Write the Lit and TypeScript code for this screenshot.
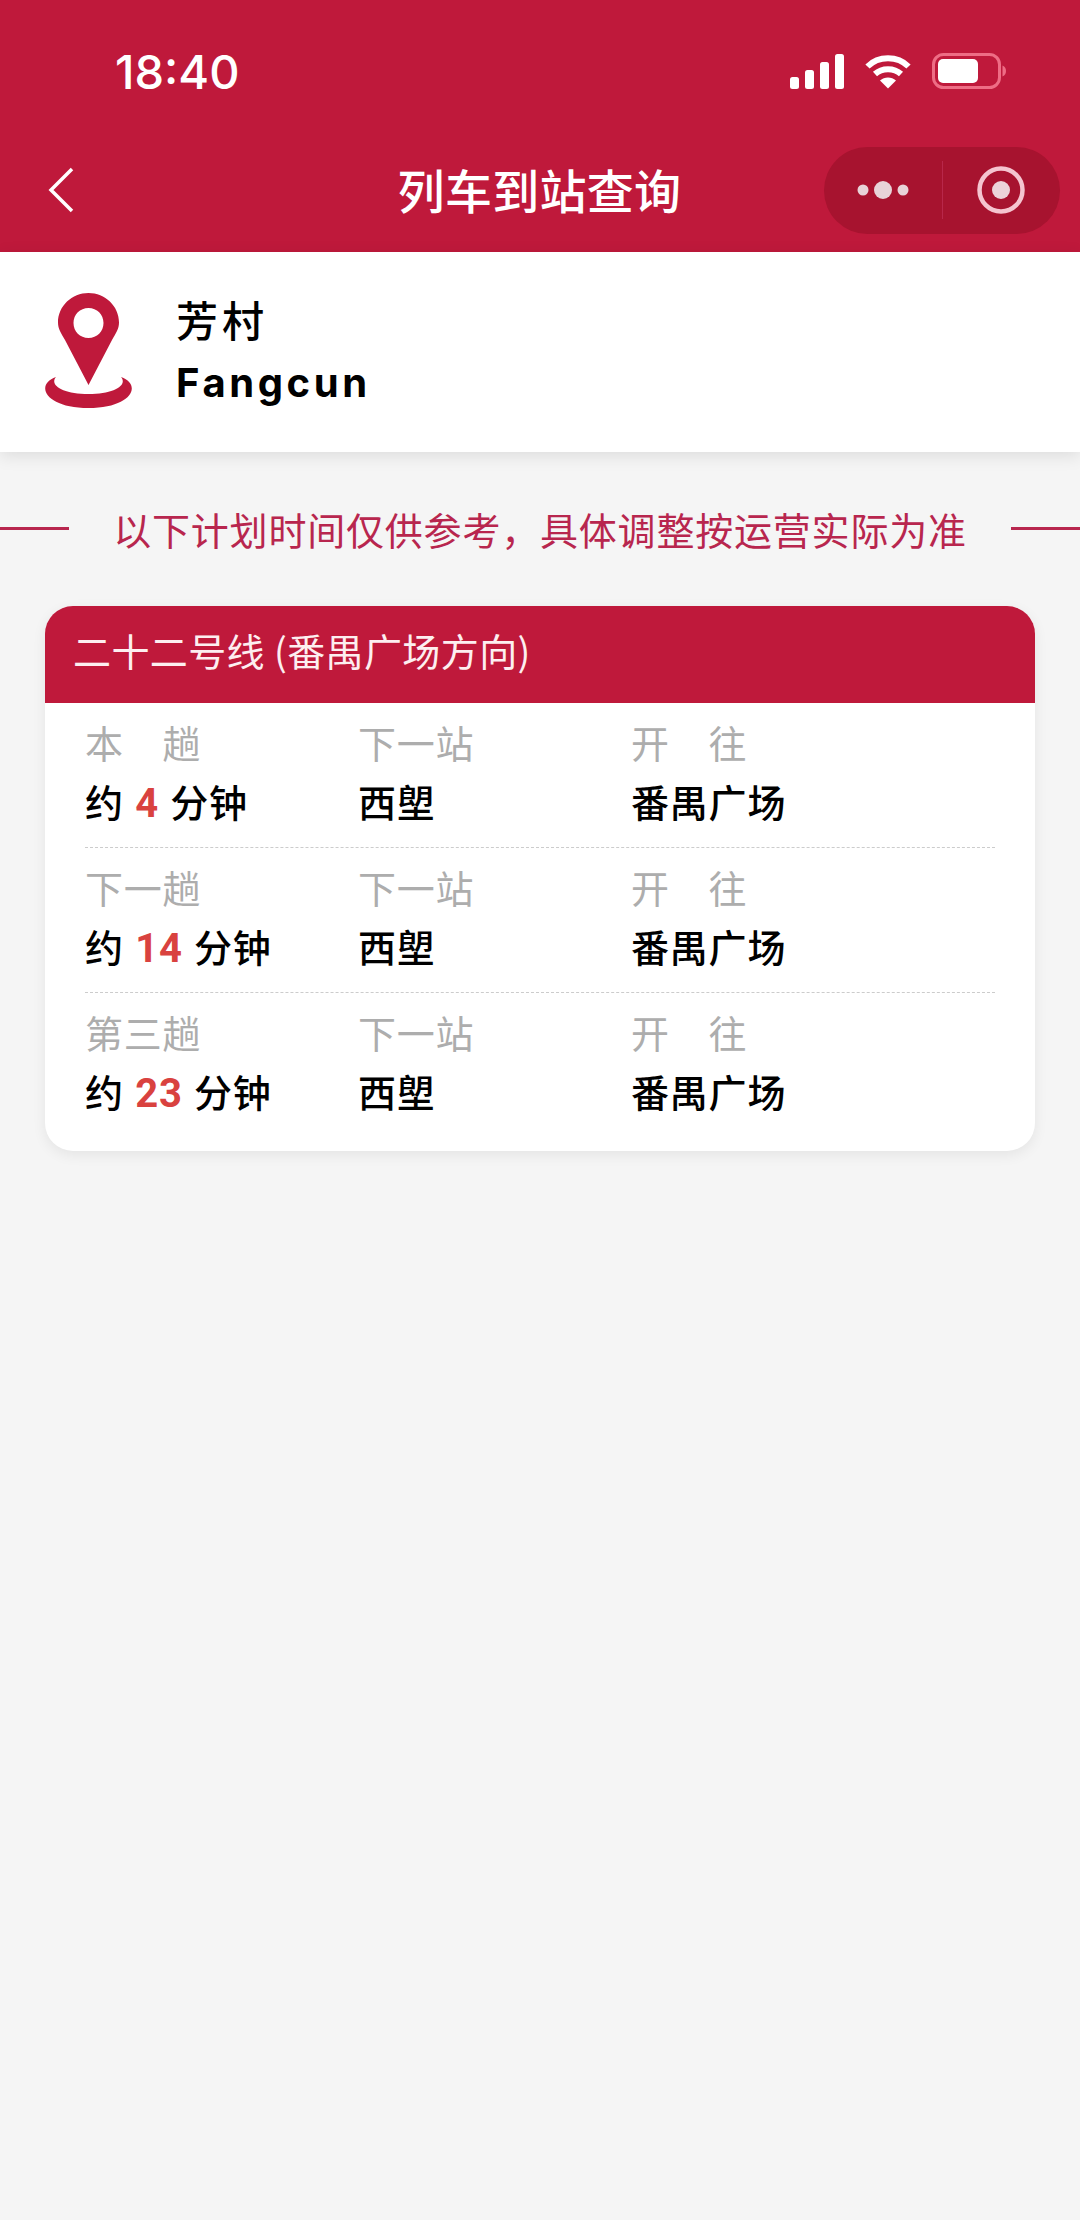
import { LitElement, html, css } from "lit";
import { customElement } from "lit/decorators.js";

const rows = [
  { label: "本　趟", n: "4" },
  { label: "下一趟", n: "14" },
  { label: "第三趟", n: "23" },
];

@customElement("app-root")
export class AppRoot extends LitElement {
  static styles = css`
    :host { display: block; width: 1080px; height: 2220px; background: #f5f5f5; font-family: "Noto Sans CJK SC", "Noto Sans", sans-serif; overflow: hidden; }
    .top { height: 252px; background: #bf193b; color: #fff; display: flex; flex-direction: column; }
    .status { height: 142px; display: flex; align-items: center; justify-content: space-between; padding: 0 74px 0 115px; box-sizing: border-box; }
    .time { font: 500 47px/1 Inter, Roboto, sans-serif; }
    .sicons { display: flex; align-items: center; gap: 21px; }
    .sicons svg { display: block; }
    .nav { flex: 1; display: grid; grid-template-columns: 1fr auto 1fr; align-items: center; padding: 0 20px 0 47px; }
    .back { display: block; margin-top: -14px; }
    .title { font-size: 47px; font-weight: 500; letter-spacing: .3px; line-height: 1; margin: -17px 0 0 -28px; white-space: nowrap; }
    .capsule { justify-self: end; width: 236px; height: 87px; border-radius: 44px; background: #a7132f; display: flex; align-items: center; margin-top: -14px; }
    .capsule > div { flex: 1; display: flex; align-items: center; justify-content: center; height: 58px; }
    .capsule > div + div { border-left: 1px solid #b8274a; }
    .station { height: 200px; background: #fff; box-shadow: 0 4px 16px rgba(0,0,0,.1); display: flex; align-items: center; gap: 43px; padding-left: 44px; position: relative; }
    .station svg { margin-top: -4px; }
    .names { font-size: 42px; font-weight: 500; color: #000; line-height: 64px; letter-spacing: 4px; margin-top: -2px; }
    .names div:last-child { font-size: 40px; font-weight: 700; letter-spacing: 3.6px; font-family: Inter, "Noto Sans", sans-serif; }
    .notice { height: 154px; display: flex; align-items: center; justify-content: space-between; color: #b8264e; font-size: 38px; letter-spacing: .8px; box-sizing: border-box; padding-bottom: 2px; }
    .notice i { display: block; width: 69px; height: 3px; background: #b8264e; }
    .card { margin: 0 45px; background: #fff; border-radius: 28px; overflow: hidden; box-shadow: 0 4px 14px rgba(0,0,0,.07); }
    .chead { height: 97px; background: #bf193b; color: #fdeef0; font-size: 38px; letter-spacing: .4px; display: flex; align-items: center; padding: 0 0 10px 28px; box-sizing: border-box; }
    .rows { padding: 0 40px; }
    .row { display: grid; grid-template-columns: 273px 273px 273px; height: 145px; align-content: start; padding-top: 14px; box-sizing: border-box; border-bottom: 1px dashed #ccc; }
    .row:last-child { border-bottom: 0; height: 158px; }
    .l { color: #adadad; font-size: 38px; letter-spacing: .8px; line-height: 50px; }
    .v { color: #000; font-size: 38px; font-weight: 500; letter-spacing: .8px; word-spacing: 2px; line-height: 50px; margin-top: 9px; white-space: pre; }
    .v b { color: #d9423f; font-family: Roboto, sans-serif; font-size: 40px; font-weight: 700; }
  `;

  render() {
    return html`
      <div class="top">
        <div class="status">
          <span class="time">18:40</span>
          <div class="sicons">
            <svg width="54" height="35" viewBox="0 0 54 35" fill="#fff">
              <rect x="0" y="23" width="9" height="12" rx="2.5"/>
              <rect x="15" y="16" width="9" height="19" rx="2.5"/>
              <rect x="30" y="8" width="9" height="27" rx="2.5"/>
              <rect x="45" y="0" width="9" height="35" rx="2.5"/>
            </svg>
            <svg width="46" height="35" viewBox="0 0 46 35" fill="none" stroke="#fff" stroke-width="6">
              <path d="M2.5 12.5C13.5 1.500 32.500 1.500 43.500 12.500"/>
              <path d="M10 20C17 13.500 29 13.500 36 20"/>
              <path d="M23 34.500L15 26.500C19.500 22.500 26.500 22.500 31 26.500Z" fill="#fff" stroke="none"/>
            </svg>
            <svg width="74" height="36" viewBox="0 0 74 36">
              <rect x="1.500" y="1.500" width="66" height="33" rx="10" fill="none" stroke="#ee6d85" stroke-width="3"/>
              <rect x="6" y="6" width="40" height="24" rx="5" fill="#fff"/>
              <path d="M70.500 12.500C73 13.500 74 15.500 74 18C74 20.500 73 22.500 70.500 23.500Z" fill="#ee6d85"/>
            </svg>
          </div>
        </div>
        <div class="nav">
          <svg class="back" width="30" height="46" viewBox="0 0 30 46" fill="none" stroke="#fff" stroke-width="3.500">
            <path d="M25 2L4 23L25 44"/>
          </svg>
          <div class="title">列车到站查询</div>
          <div class="capsule">
            <div>
              <svg width="52" height="20" viewBox="0 0 52 20" fill="#e8d3d8">
                <circle cx="6" cy="10" r="5.500"/><circle cx="26" cy="10" r="9"/><circle cx="46" cy="10" r="5.500"/>
              </svg>
            </div>
            <div>
              <svg width="48" height="48" viewBox="0 0 48 48" fill="none">
                <circle cx="24" cy="24" r="21.500" stroke="#f5c4cf" stroke-width="4.500"/>
                <circle cx="24" cy="24" r="9" fill="#ecd3d9"/>
              </svg>
            </div>
          </div>
        </div>
      </div>
      <div class="station">
        <svg width="89" height="115" viewBox="0 0 89 115">
          <path d="M12 84C-10 92 2 115 44.500 115C87 115 99 92 77 84C84 92 70 101 44.500 101C19 101 5 92 12 84Z" fill="#bf193b"/>
          <path fill-rule="evenodd" d="M44.500 92L21 47C17 40 14 36 14 29.500C14 13 28 0 44.500 0C61 0 75 13 75 29.500C75 36 72 40 68 47ZM44.500 15C36 15 29.500 21.500 29.500 30C29.500 38.500 36 45 44.500 45C53 45 59.500 38.500 59.500 30C59.500 21.500 53 15 44.500 15Z" fill="#bf193b"/>
        </svg>
        <div class="names">
          <div>芳村</div>
          <div>Fangcun</div>
        </div>
      </div>
      <div class="notice">
        <i></i>
        <span>以下计划时间仅供参考，具体调整按运营实际为准</span>
        <i></i>
      </div>
      <div class="card">
        <div class="chead">二十二号线 (番禺广场方向)</div>
        <div class="rows">
          ${rows.map(
            (r) => html`<div class="row">
              <div class="l">${r.label}</div>
              <div class="l">下一站</div>
              <div class="l">开　往</div>
              <div class="v">约 <b>${r.n}</b> 分钟</div>
              <div class="v">西塱</div>
              <div class="v">番禺广场</div>
            </div>`
          )}
        </div>
      </div>
    `;
  }
}
